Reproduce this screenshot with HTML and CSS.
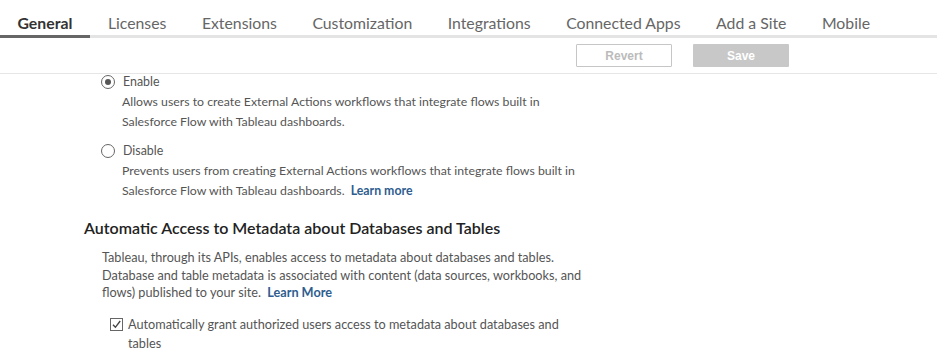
FILE: index.html
```html
<!DOCTYPE html>
<html lang="en">
<head>
    <meta charset="UTF-8">
    <title>Site Settings - General</title>
    <link rel="stylesheet" href="styles.css">
</head>
<body>
    <nav class="tabs">
        <a class="tab active">General</a>
        <a class="tab">Licenses</a>
        <a class="tab">Extensions</a>
        <a class="tab">Customization</a>
        <a class="tab">Integrations</a>
        <a class="tab">Connected Apps</a>
        <a class="tab">Add a Site</a>
        <a class="tab">Mobile</a>
    </nav>

    <div class="toolbar">
        <button class="btn btn-revert" disabled>Revert</button>
        <button class="btn btn-save" disabled>Save</button>
    </div>

    <div class="content">
        <div class="options">
            <div class="option">
                <label class="option-row">
                    <span class="radio checked"></span>
                    Enable
                </label>
                <p class="option-desc">Allows users to create External Actions workflows that integrate flows built in Salesforce Flow with Tableau dashboards.</p>
            </div>
            <div class="option">
                <label class="option-row">
                    <span class="radio"></span>
                    Disable
                </label>
                <p class="option-desc">Prevents users from creating External Actions workflows that integrate flows built in Salesforce Flow with Tableau dashboards. <a class="link">Learn more</a></p>
            </div>
        </div>

        <h2 class="section-title">Automatic Access to Metadata about Databases and Tables</h2>
        <p class="section-desc">Tableau, through its APIs, enables access to metadata about databases and tables. Database and table metadata is associated with content (data sources, workbooks, and flows) published to your site. <a class="link">Learn More</a></p>

        <label class="check-row">
            <span class="checkbox">
                <svg width="11" height="11" viewBox="0 0 11 11"><path d="M2 5.8 L4.4 8.3 L9.2 2" fill="none" stroke="#444" stroke-width="1.4"/></svg>
            </span>
            <span>Automatically grant authorized users access to metadata about databases and tables</span>
        </label>
    </div>
</body>
</html>
```

FILE: styles.css
```css
body {
    margin: 0;
    font-family: Lato, "Open Sans", sans-serif;
    color: #555;
    background: #fff;
    overflow: hidden;
}
.tabs {
    display: flex;
    border-bottom: 3px solid #e4e4e4;
}
.tab {
    padding: 13px 18px 2px 17.5px;
    margin-bottom: -3px;
    font-size: 15.8px;
    line-height: 20px;
    color: #666;
    border-bottom: 3px solid transparent;
}
.tab.active {
    color: #333;
    font-weight: bold;
    border-bottom-color: #666;
}
.toolbar {
    display: flex;
    justify-content: flex-end;
    gap: 21px;
    padding: 6px 148px 6px 0;
    border-bottom: 1px solid #e6e6e6;
}
.btn {
    width: 96px;
    height: 23px;
    font-family: "Liberation Sans", Arial, sans-serif;
    font-size: 12px;
    font-weight: bold;
    border-radius: 1px;
}
.btn-revert {
    background: #fff;
    color: #bbb;
    border: 1px solid #c6c6c6;
}
.btn-save {
    background: #c8c8c8;
    color: #fff;
    border: none;
}
.content {
    margin-left: 84px;
    width: 510px;
}
.options {
    margin-top: -2px;
    margin-left: 17px;
}
.option {
    margin-bottom: 9px;
}
.option-row {
    display: flex;
    align-items: center;
    gap: 8px;
    font-size: 12.4px;
    line-height: 20px;
}
.radio {
    width: 12px;
    height: 12px;
    border: 1px solid #666;
    border-radius: 50%;
    display: flex;
    align-items: center;
    justify-content: center;
}
.radio.checked::after {
    content: "";
    width: 6px;
    height: 6px;
    border-radius: 50%;
    background: #555;
}
.option-desc {
    margin: 0 0 0 21px;
    font-size: 12.3px;
    line-height: 20px;
}
.link {
    color: #2e5d8f;
    font-weight: bold;
    margin-left: 3px;
}
.section-title {
    margin: 17px 0 11px;
    font-size: 16px;
    line-height: 20px;
    font-weight: 600;
    color: #222;
}
.section-desc {
    margin: 0 0 13px 18px;
    width: 484px;
    font-size: 12.7px;
    line-height: 17.5px;
}
.check-row {
    display: flex;
    align-items: flex-start;
    gap: 5px;
    margin-left: 26px;
    width: 460px;
    font-size: 12.7px;
    line-height: 19px;
}
.checkbox {
    flex: none;
    width: 11px;
    height: 11px;
    margin-top: 3px;
    border: 1px solid #666;
    display: flex;
}
```
